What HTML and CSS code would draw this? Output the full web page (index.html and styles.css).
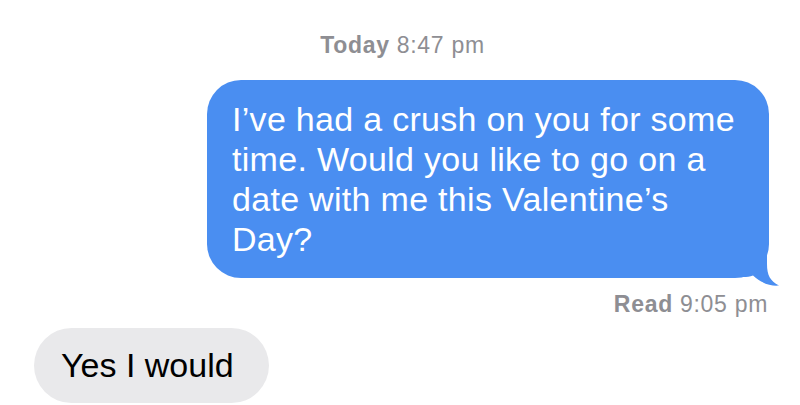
FILE: index.html
```html
<!DOCTYPE html>
<html lang="en">
<head>
<meta charset="utf-8">
<title>Messages</title>
<link rel="stylesheet" href="styles.css">
</head>
<body>
<main class="chat">
  <div class="stamp"><b>Today</b> 8:47 pm</div>
  <div class="bubble sent">
    I’ve had a crush on you for some time. Would you like to go on a date with me this Valentine’s Day?
    <svg class="tail" width="40" height="44" viewBox="0 0 40 44" aria-hidden="true">
      <path d="M0 0 L24 0 L24 20 C24 31 27 37 36 41.5 C28 42.5 18 39 10 31.5 C7 32.5 4 33 0 33 Z" fill="#4a8ef1"/>
    </svg>
  </div>
  <div class="status"><b>Read</b> 9:05 pm</div>
  <div class="bubble received">Yes I would</div>
</main>
</body>
</html>
```
FILE: styles.css
```css
html, body {
  margin: 0;
  padding: 0;
  background: #ffffff;
}

body {
  font-family: "Liberation Sans", Arial, sans-serif;
  width: 800px;
  height: 405px;
  overflow: hidden;
}

.chat {
  display: flex;
  flex-direction: column;
  padding: 33px 31px 0 34px;
}

.stamp,
.status {
  font-size: 23px;
  line-height: 24px;
  letter-spacing: 0.7px;
  color: #8e8e93;
}

.stamp b,
.status b {
  font-weight: 700;
}

.stamp {
  align-self: center;
  margin-left: 2px;
}

.bubble {
  font-size: 34px;
  line-height: 40px;
}

.sent {
  position: relative;
  align-self: flex-end;
  width: 512px;
  margin-top: 23px;
  padding: 19px 25px;
  background: #4a8ef1;
  color: #ffffff;
  border-radius: 34px;
  letter-spacing: 0.3px;
}

.tail {
  position: absolute;
  right: -14px;
  bottom: -10px;
}

.status {
  align-self: flex-end;
  margin-top: 14px;
  margin-right: 1px;
}

.received {
  align-self: flex-start;
  margin-top: 12px;
  height: 75px;
  line-height: 75px;
  padding: 0 35px 0 27px;
  background: #e9e9eb;
  color: #000000;
  border-radius: 38px;
}
```
